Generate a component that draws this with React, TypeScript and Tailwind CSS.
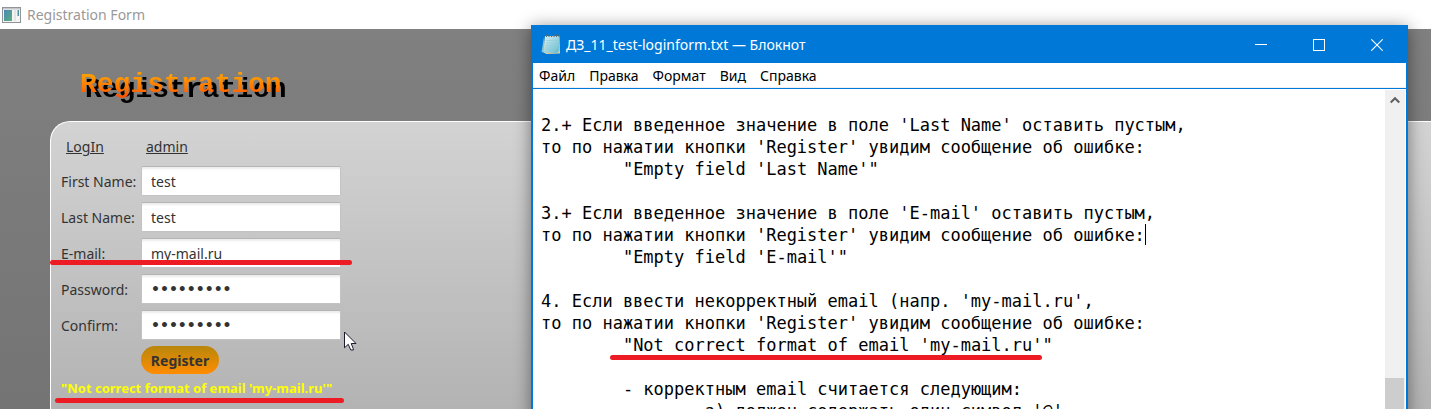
import React from "react";

const notes = [
  "",
  "2.+ Если введенное значение в поле 'Last Name' оставить пустым,",
  "то по нажатии кнопки 'Register' увидим сообщение об ошибке:",
  "\t\"Empty field 'Last Name'\"",
  "",
  "3.+ Если введенное значение в поле 'E-mail' оставить пустым,",
  "то по нажатии кнопки 'Register' увидим сообщение об ошибке:",
  "\t\"Empty field 'E-mail'\"",
  "",
  "4. Если ввести некорректный email (напр. 'my-mail.ru',",
  "то по нажатии кнопки 'Register' увидим сообщение об ошибке:",
  "\t\"Not correct format of email 'my-mail.ru'\"",
  "",
  "\t- корректным email считается следующим:",
  "\t\tа) должен содержать один символ '@'",
].join("\n");

const plain = "text-[14px]";
const dotted = "font-['DejaVu_Sans',sans-serif] text-[14px] font-bold";

const fields = [
  { id: "first", label: "First Name:", type: "text", value: "test" },
  { id: "last", label: "Last Name:", type: "text", value: "test" },
  { id: "email", label: "E-mail:", type: "text", value: "my-mail.ru" },
  { id: "password", label: "Password:", type: "password", value: "123456789" },
  { id: "confirm", label: "Confirm:", type: "password", value: "123456789" },
];

const menus = ["Файл", "Правка", "Формат", "Вид", "Справка"];

function AppIcon() {
  return (
    <svg width="19" height="16" viewBox="0 0 19 16" aria-hidden="true">
      <defs>
        <linearGradient id="screen" x1="0" y1="0" x2="1" y2="1">
          <stop offset="0" stopColor="#4f86b8" />
          <stop offset="1" stopColor="#58b07c" />
        </linearGradient>
      </defs>
      <rect x="0.5" y="0.5" width="18" height="15" fill="#f4f4f4" stroke="#8f9499" />
      <rect x="1" y="1" width="17" height="1.5" fill="#c3c7cb" />
      <rect x="2" y="3" width="8" height="11" fill="url(#screen)" />
      <rect x="12" y="3" width="2" height="11" fill="#e3e3e3" />
      <rect x="15.5" y="3" width="1.5" height="6" fill="#4b93a2" />
    </svg>
  );
}

function NotepadIcon() {
  return (
    <svg width="20" height="21" viewBox="0 0 20 21" aria-hidden="true">
      <defs>
        <linearGradient id="pad" x1="0" y1="0" x2="1" y2="1">
          <stop offset="0" stopColor="#d5f1f6" />
          <stop offset="1" stopColor="#63b9cc" />
        </linearGradient>
      </defs>
      <path d="M3 3 L0.5 18 L4 19 Z" fill="#7fc4dc" />
      <path d="M4 2 H18.5 L19 19.5 L5 20 L2.5 18 Z" fill="#d8d0a4" />
      <path d="M4 2.5 H18 V17 L16 19 L3 18.5 Z" fill="url(#pad)" />
      <path d="M5.5 6.5H16.5M5.2 9H16.5M5 11.5H16.5M4.8 14H16" stroke="#8fcbd8" strokeWidth="0.7" />
      <path d="M5.5 0.5V3M8 0.5V3M10.5 0.5V3M13 0.5V3M15.5 0.5V3M18 0.5V3" stroke="#56707c" strokeWidth="1" />
    </svg>
  );
}

function Notepad() {
  return (
    <section className="absolute top-[25px] right-[23px] left-[531px] border-2 border-t border-[#0078d7] bg-white shadow-[0_2px_16px_rgba(0,0,0,0.45)]">
      <header className="flex h-[37px] items-center bg-[#0078d7] pl-2 text-white">
        <NotepadIcon />
        <h2 className="ml-[5px] flex-1 text-[14px]">ДЗ_11_test-loginform.txt — Блокнот</h2>
        <button aria-label="Свернуть" className="flex h-full w-[58px] items-center justify-center">
          <svg width="12" height="12"><path d="M0 5.5H12" stroke="white" /></svg>
        </button>
        <button aria-label="Развернуть" className="flex h-full w-[58px] items-center justify-center">
          <svg width="12" height="12"><rect x="0.5" y="0.5" width="11" height="11" fill="none" stroke="white" /></svg>
        </button>
        <button aria-label="Закрыть" className="flex h-full w-[58px] items-center justify-center">
          <svg width="12" height="12"><path d="M0.3 0.3L11.7 11.7M11.7 0.3L0.3 11.7" stroke="white" strokeWidth="1.1" /></svg>
        </button>
      </header>
      <nav className="flex h-[25px] items-center gap-[14px] border-b border-[#f0f0f0] pl-[6px] text-[14px] text-black">
        {menus.map((m) => (
          <button key={m}>{m}</button>
        ))}
      </nav>
      <div className="flex border-t border-[#0078d7] pt-px">
        <div className="relative min-w-0 flex-1">
          <textarea
            aria-label="Текст"
            wrap="off"
            rows={15}
            spellCheck={false}
            defaultValue={notes}
            className="block w-full resize-none overflow-hidden pt-[2px] pl-2 font-['DejaVu_Sans_Mono','Liberation_Mono',monospace] text-[17px] leading-[22px] text-black outline-none [tab-size:8]"
          />
          <span className="absolute top-[134px] left-[612px] h-[21px] w-px bg-black" />
          <span className="absolute top-[265px] left-[77px] h-[5px] w-[432px] rounded-full bg-[#ed1c24]" />
        </div>
        <div className="mr-px flex w-[20px] flex-col bg-[#f0f0f0]">
          <button aria-label="Вверх" className="flex h-[20px] items-center justify-center">
            <svg width="10" height="8"><path d="M0.7 6.5L5 2.2L9.3 6.5" fill="none" stroke="#606060" strokeWidth="2.2" /></svg>
          </button>
          <div className="mt-[268px] mr-px flex-1 bg-[#cdcdcd]" />
        </div>
      </div>
    </section>
  );
}

export default function App() {
  return (
    <div className="relative flex h-screen flex-col overflow-hidden bg-white font-['Noto_Sans','Open_Sans',sans-serif]">
      <header className="flex h-[29px] shrink-0 items-center gap-[6px] pl-[2px] text-[14px] text-[#999999]">
        <AppIcon />
        <span>Registration Form</span>
      </header>
      <main className="flex flex-1 flex-col bg-linear-to-b from-[#808080] to-[#747474]">
        <div className="flex h-[92px] shrink-0 items-start pt-[40px] pl-[80px]">
          <h1 className="bg-linear-to-b from-[#ff9d00] from-20% to-[#ff5500] to-85% bg-clip-text font-['Liberation_Mono',monospace] text-[28px] leading-[32px] font-bold text-transparent drop-shadow-[5px_5px_0_#000]">
            Registration
          </h1>
        </div>
        <form
          onSubmit={(e) => e.preventDefault()}
          className="ml-[50px] flex-1 rounded-tl-[20px] border-t border-l border-white bg-linear-to-b from-[#d3d3d3] to-[#b3b3b3] pt-[13px] pl-[10px] text-[14px] text-[#333333]"
        >
          <div className="grid grid-cols-[80px_200px] items-center gap-y-[6px]">
            <a href="#login" className="ml-[5px] h-[25px] leading-[24px] underline">LogIn</a>
            <a href="#admin" className="ml-[5px] h-[25px] leading-[24px] underline">admin</a>
            {fields.map((f) => (
              <React.Fragment key={f.id}>
                <label htmlFor={f.id} className="whitespace-nowrap">{f.label}</label>
                <input
                  id={f.id}
                  type={f.type}
                  defaultValue={f.value}
                  className={`h-[30px] w-full rounded-[2px] border border-[#c3c3c3] border-t-[#b4b4b4] bg-white px-[9px] shadow-[inset_0_3px_2px_-1px_#ececec] outline-none ${f.type === "password" ? dotted : plain}`}
                />
              </React.Fragment>
            ))}
            <button
              type="submit"
              className="col-start-2 h-[28px] w-[78px] rounded-full bg-linear-to-b from-[#b8860b] to-[#ff8c00] font-bold"
            >
              Register
            </button>
          </div>
          <p className="pt-1 text-[13px] leading-[20px] font-bold text-[#ffff00]">
            "Not correct format of email 'my-mail.ru'"
          </p>
        </form>
      </main>
      <span className="absolute top-[260px] left-[50px] h-[5px] w-[302px] rounded-full bg-[#ed1c24]" />
      <span className="absolute top-[398px] left-[55px] h-[5px] w-[289px] rounded-full bg-[#ed1c24]" />
      <svg className="absolute top-[331px] left-[344px]" width="13" height="20" viewBox="0 0 13 20" aria-hidden="true">
        <path d="M0.5 1V16.8L4.2 13.3L6.8 19H9.3V17.8L7.2 12.5H12Z" fill="white" stroke="#1a1a2e" />
      </svg>
      <Notepad />
    </div>
  );
}
